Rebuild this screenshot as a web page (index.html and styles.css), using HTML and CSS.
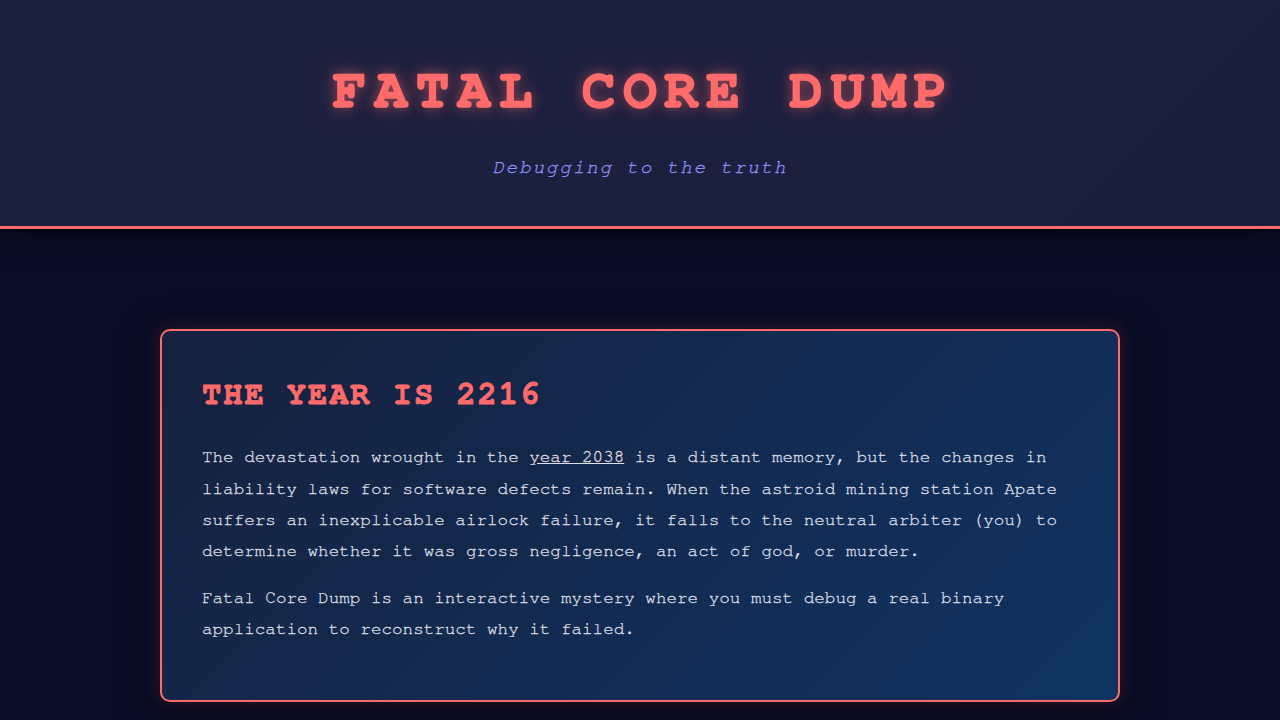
FILE: index.html
```html
<!doctype html>
<html lang="en">
<head>
	<meta charset="UTF-8">
	<title>Fatal Core Dump</title>
	<link rel="stylesheet" href="styles.css">
</head>
<body>
	<header class="masthead">
		<h1 class="title">FATAL CORE DUMP</h1>
		<p class="tagline">Debugging to the truth</p>
	</header>

	<main class="content">
		<section class="card">
			<h2 class="card-title">THE YEAR IS 2216</h2>
			<p>The devastation wrought in the <a href="#">year 2038</a> is a distant memory, but the changes in liability laws for software defects remain. When the astroid mining station Apate suffers an inexplicable airlock failure, it falls to the neutral arbiter (you) to determine whether it was gross negligence, an act of god, or murder.</p>
			<p>Fatal Core Dump is an interactive mystery where you must debug a real binary application to reconstruct why it failed.</p>
		</section>
	</main>
</body>
</html>
```

FILE: styles.css
```css
*{box-sizing: border-box;}
html,body{margin: 0;padding: 0;}
body{
	background-color: #0a0d26;
	color: #dcdde5;
	font-family: "Nimbus Mono PS", "Nimbus Mono L", "FreeMono", "Courier 10 Pitch", "Liberation Mono", monospace;
	min-height: 720px;
}
.masthead{
	height: 229px;
	padding-top: 62px;
	text-align: center;
	background: linear-gradient(135deg, #1d2140 0%, #1b1f3e 100%);
	border-bottom: 3px solid #ff6b6b;
	box-shadow: 0 4px 24px rgba(0,0,0,0.6);
}
/* trailing letter-spacing pushes the title left, indent evens it out */
.title{
	margin: 0;
	font-size: 56px;
	line-height: 1;
	font-weight: bold;
	letter-spacing: 7.9px;
	text-indent: 7.9px;
	color: #ff6b6b;
	-webkit-text-stroke: 1.6px #ff6b6b;
	text-shadow: 0 0 12px rgba(255,107,107,0.55), 0 0 24px rgba(255,107,107,0.3);
}
.tagline{
	margin: 40px 0 0;
	font-size: 19.2px;
	font-style: italic;
	letter-spacing: 1.9px;
	color: #9090f4;
	-webkit-text-stroke: 0.3px #9090f4;
}
.content{
	padding: 100px 20px 40px;
}
.card{
	max-width: 960px;
	margin: 0 auto;
	padding: 40px;
	border: 2px solid #ff6b6b;
	border-radius: 10px;
	background: linear-gradient(135deg, #17213f 0%, #0f3361 100%);
	box-shadow: 0 0 18px rgba(255,107,107,0.18), 0 10px 40px rgba(0,0,0,0.55);
}
.card-title{
	margin: 4px 0 29px;
	font-size: 32px;
	line-height: 1.2;
	letter-spacing: 2px;
	color: #ff6b6b;
	-webkit-text-stroke: 0.8px #ff6b6b;
}
.card p{
	margin: 0 0 15px;
	font-size: 17.6px;
	line-height: 1.78;
	-webkit-text-stroke: 0.3px #dcdde5;
}
.card a{
	color: #f3d6d8;
	text-decoration: underline;
}
```
